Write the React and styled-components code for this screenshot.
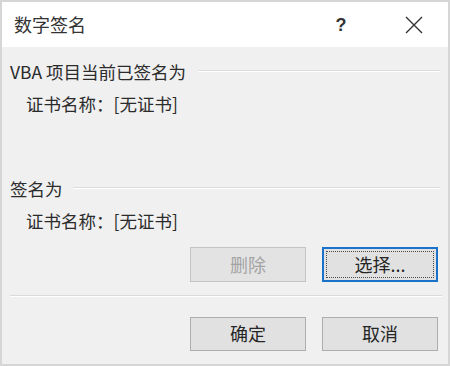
import React from "react"
import styled, { createGlobalStyle } from "styled-components"

const GlobalStyle = createGlobalStyle`
  html, body {
    margin: 0;
    padding: 0;
    background: #ffffff;
  }
  * {
    box-sizing: border-box;
  }
`

const FONT = `"Noto Sans CJK SC", "Noto Sans", "Liberation Sans", sans-serif`

const StyledWindow = styled.div`
  width: 450px;
  height: 366px;
  border: 2px solid #d6d6d6;
  display: flex;
  flex-direction: column;
  font-family: ${FONT};
  color: #2b2b2b;
  overflow: hidden;
`

const StyledTitleBar = styled.div`
  height: 45px;
  flex: none;
  background: #ffffff;
  display: flex;
  align-items: center;
  padding-left: 12px;
`

const StyledTitle = styled.div`
  flex: 1;
  font-size: 18px;
  color: #333333;
  line-height: 24px;
  padding-bottom: 1px;
`

const StyledCaptionButton = styled.div`
  width: ${props => props.width}px;
  height: 45px;
  display: flex;
  align-items: center;
  justify-content: center;
  color: #333333;
`

const StyledHelp = styled.span`
  font-family: "Liberation Sans", sans-serif;
  font-weight: bold;
  font-size: 18px;
  line-height: 20px;
`

const StyledBody = styled.div`
  flex: 1;
  background: #f0f0f0;
  padding: 13px 8px 0 8px;
  display: flex;
  flex-direction: column;
`

const StyledGroupHeader = styled.div`
  display: flex;
  align-items: center;
  height: 24px;
  margin-top: ${props => props.top || 0}px;
  font-size: 17.5px;
  line-height: 24px;
`

const StyledEtch = styled.div`
  flex: 1;
  height: 2px;
  border-top: 1px solid #dcdcdc;
  border-bottom: 1px solid #ffffff;
  margin-left: ${props => props.gap || 0}px;
  margin-top: -2px;
`

const StyledCertLine = styled.div`
  margin-top: 8px;
  padding-left: 16px;
  font-size: 17.5px;
  line-height: 24px;
  height: 24px;
`

const StyledButtonRow = styled.div`
  display: flex;
  justify-content: flex-end;
  gap: 16px;
  padding-right: 2px;
  margin-top: ${props => props.top}px;
`

const StyledButton = styled.div`
  position: relative;
  width: 116px;
  height: ${props => props.h || 35}px;
  display: flex;
  align-items: center;
  justify-content: center;
  font-size: 18px;
  padding-bottom: 2px;
  background: ${props => (props.disabled ? "#e3e3e3" : "#e1e1e1")};
  border: ${props =>
    props.focused ? "2px solid #1a73c8" : props.disabled ? "1px solid #c4c4c4" : "1px solid #adadad"};
  color: ${props => (props.disabled ? "#a3a3a3" : "#262626")};

  &::after {
    content: "";
    display: ${props => (props.focused ? "block" : "none")};
    position: absolute;
    inset: 2px;
    border: 1px dotted #4a4a4a;
  }
`

const StyledSeparator = styled.div`
  height: 2px;
  border-top: 1px solid #dadada;
  border-bottom: 1px solid #ffffff;
  margin-top: 13px;
  margin-right: -2px;
`

const CloseIcon = () => (
  <svg width="18" height="18" viewBox="0 0 18 18">
    <path d="M1 1 L17 17 M17 1 L1 17" stroke="#333333" strokeWidth="1.4" fill="none" />
  </svg>
)

const App = () => {
  return (
    <>
      <GlobalStyle />
      <StyledWindow>
        <StyledTitleBar>
          <StyledTitle>数字签名</StyledTitle>
          <StyledCaptionButton width={40}>
            <StyledHelp>?</StyledHelp>
          </StyledCaptionButton>
          <StyledCaptionButton width={30} />
          <StyledCaptionButton width={46}>
            <CloseIcon />
          </StyledCaptionButton>
          <StyledCaptionButton width={11} />
        </StyledTitleBar>
        <StyledBody>
          <StyledGroupHeader>
            <span>VBA 项目当前已签名为</span>
            <StyledEtch gap={12} />
          </StyledGroupHeader>
          <StyledCertLine>证书名称：[无证书]</StyledCertLine>
          <StyledGroupHeader top={61}>
            <span>签名为</span>
            <StyledEtch gap={10} />
          </StyledGroupHeader>
          <StyledCertLine>证书名称：[无证书]</StyledCertLine>
          <StyledButtonRow top={14}>
            <StyledButton disabled>删除</StyledButton>
            <StyledButton focused>选择...</StyledButton>
          </StyledButtonRow>
          <StyledSeparator />
          <StyledButtonRow top={20}>
            <StyledButton h={34}>确定</StyledButton>
            <StyledButton h={34}>取消</StyledButton>
          </StyledButtonRow>
        </StyledBody>
      </StyledWindow>
    </>
  )
}

export default App
